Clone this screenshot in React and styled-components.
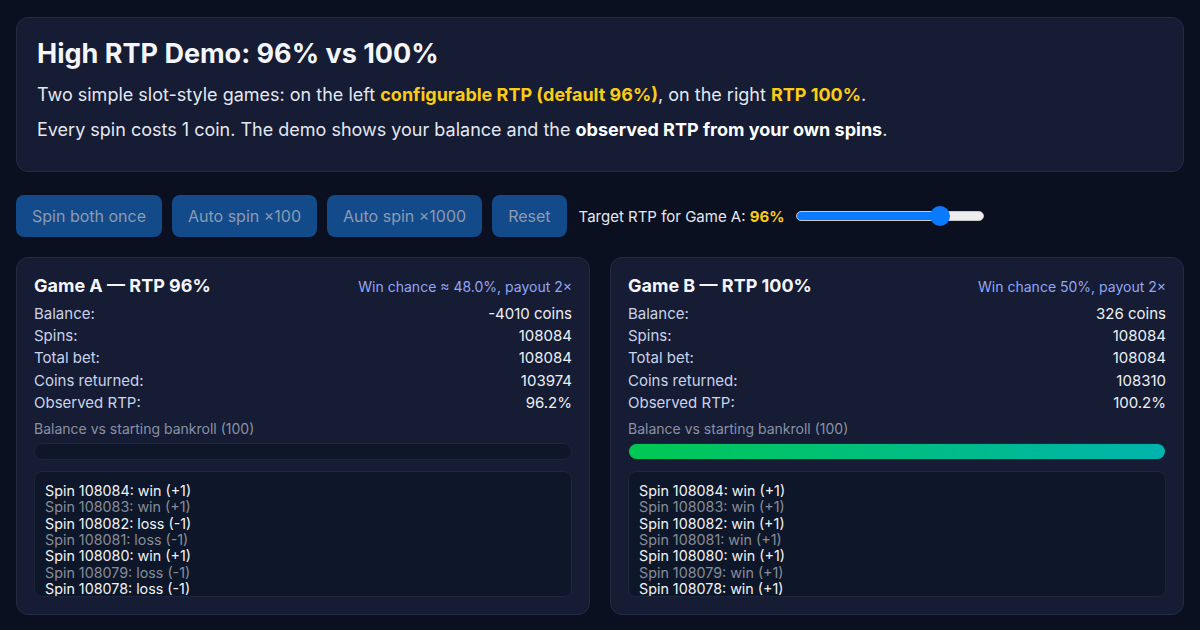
import React from 'react';
import styled, { createGlobalStyle } from 'styled-components';

const GlobalStyle = createGlobalStyle`
  * { box-sizing: border-box; }
  body {
    margin: 0;
    background: #0b1020;
    color: #e8ebf3;
    font-family: Inter, "Noto Sans", "Liberation Sans", sans-serif;
  }
`;

const gameA = {
  title: 'Game A — RTP 96%',
  note: 'Win chance ≈ 48.0%, payout 2×',
  stats: [
    ['Balance:', '-4010 coins'],
    ['Spins:', '108084'],
    ['Total bet:', '108084'],
    ['Coins returned:', '103974'],
    ['Observed RTP:', '96.2%'],
  ],
  fill: 0,
  log: ['win (+1)', 'win (+1)', 'loss (-1)', 'loss (-1)', 'win (+1)', 'loss (-1)', 'loss (-1)'],
};

const gameB = {
  title: 'Game B — RTP 100%',
  note: 'Win chance 50%, payout 2×',
  stats: [
    ['Balance:', '326 coins'],
    ['Spins:', '108084'],
    ['Total bet:', '108084'],
    ['Coins returned:', '108310'],
    ['Observed RTP:', '100.2%'],
  ],
  fill: 100,
  log: ['win (+1)', 'win (+1)', 'win (+1)', 'win (+1)', 'win (+1)', 'win (+1)', 'win (+1)'],
};

function GameCard({ game }) {
  return (
    <Card>
      <CardHead>
        <CardTitle>{game.title}</CardTitle>
        <CardNote>{game.note}</CardNote>
      </CardHead>
      <Stats>
        {game.stats.map(([label, value]) => (
          <StatRow key={label}>
            <StatLabel>{label}</StatLabel>
            <StatValue>{value}</StatValue>
          </StatRow>
        ))}
      </Stats>
      <BarLabel>Balance vs starting bankroll (100)</BarLabel>
      <BarTrack>
        <BarFill style={{ width: `${game.fill}%` }} />
      </BarTrack>
      <LogBox>
        {game.log.map((entry, i) => (
          <LogLine key={i}>Spin {108084 - i}: {entry}</LogLine>
        ))}
      </LogBox>
    </Card>
  );
}

export default function App() {
  return (
    <Page>
      <GlobalStyle />
      <Intro>
        <Title>High RTP Demo: 96% vs 100%</Title>
        <Text>
          Two simple slot-style games: on the left <Accent>configurable RTP (default 96%)</Accent>, on the right <Accent>RTP 100%</Accent>.
        </Text>
        <Text>
          Every spin costs 1 coin. The demo shows your balance and the <strong>observed RTP from your own spins</strong>.
        </Text>
      </Intro>

      <Controls>
        <Button>Spin both once</Button>
        <Button>Auto spin ×100</Button>
        <Button>Auto spin ×1000</Button>
        <Button>Reset</Button>
        <RtpLabel>
          <span>Target RTP for Game A: <Accent>96%</Accent></span>
          <Range type="range" min="80" max="100" defaultValue="96" $fill={(96 - 80) / 20 * 100} />
        </RtpLabel>
      </Controls>

      <Games>
        <GameCard game={gameA} />
        <GameCard game={gameB} />
      </Games>
    </Page>
  );
}

const Page = styled.div`
  padding: 17px 16px 14px;
`;

const Intro = styled.section`
  background: #151c33;
  border: 1px solid #222b46;
  border-radius: 12px;
  padding: 20px 20px 29px;
  display: flex;
  flex-direction: column;
  gap: 10px;
`;

const Title = styled.h1`
  margin: 0 0 2px;
  font-size: 27px;
  line-height: 32px;
  font-weight: 700;
  color: #f3f5fa;
`;

const Text = styled.p`
  margin: 0;
  font-size: 18px;
  line-height: 25px;
  color: #e4e8f1;

  strong {
    font-weight: 700;
    color: #ffffff;
  }
`;

const Accent = styled.span`
  color: #facc15;
  font-weight: 700;
`;

const Controls = styled.div`
  display: flex;
  align-items: center;
  gap: 10px;
  margin: 23px 0 20px;
`;

const Button = styled.button`
  background: #124a8a;
  color: #8b9bb2;
  border: none;
  border-radius: 8px;
  padding: 0 16px;
  height: 42px;
  font-family: inherit;
  font-size: 16px;
`;

const RtpLabel = styled.label`
  display: flex;
  align-items: center;
  gap: 12px;
  margin-left: 2px;
  font-size: 15px;
  color: #e4e8f1;
`;

const Range = styled.input`
  -webkit-appearance: none;
  appearance: none;
  width: 188px;
  height: 10px;
  margin: 0;
  border-radius: 5px;
  border: 1px solid #c9c9c9;
  background: linear-gradient(
    to right,
    #0a7bff 0%,
    #0a7bff ${(p) => p.$fill}%,
    #ededed ${(p) => p.$fill}%,
    #ededed 100%
  );

  &::-webkit-slider-thumb {
    -webkit-appearance: none;
    width: 20px;
    height: 20px;
    border-radius: 50%;
    background: #0a7bff;
    border: none;
  }
`;

const Games = styled.div`
  display: grid;
  grid-template-columns: 1fr 1fr;
  gap: 20px;
`;

const Card = styled.section`
  background: #151c33;
  border: 1px solid #222b46;
  border-radius: 12px;
  padding: 16px 17px 17px;
`;

const CardHead = styled.div`
  display: flex;
  justify-content: space-between;
  align-items: center;
`;

const CardTitle = styled.h2`
  margin: 0;
  font-size: 18px;
  line-height: 24px;
  font-weight: 700;
  color: #f3f5fa;
`;

const CardNote = styled.span`
  font-size: 14px;
  color: #93a6f7;
`;

const Stats = styled.div`
  margin-top: 5px;
`;

const StatRow = styled.div`
  display: flex;
  justify-content: space-between;
  font-size: 15px;
  line-height: 22.2px;
`;

const StatLabel = styled.span`
  color: #c9d3ec;
`;

const StatValue = styled.span`
  color: #eef0f5;
`;

const BarLabel = styled.div`
  margin-top: 6px;
  font-size: 14px;
  line-height: 18px;
  color: #8a92a6;
`;

const BarTrack = styled.div`
  margin-top: 5px;
  height: 17px;
  border-radius: 9px;
  background: #0e1729;
  border: 1px solid #1c253b;
  overflow: hidden;
`;

const BarFill = styled.div`
  height: 100%;
  background: linear-gradient(to right, #00c853, #00b3ad);
`;

const LogBox = styled.div`
  margin-top: 11px;
  height: 126px;
  overflow: hidden;
  background: #0e1729;
  border: 1px solid #1c253b;
  border-radius: 8px;
  padding: 11px 10px 0;
`;

const LogLine = styled.div`
  font-size: 14.3px;
  line-height: 16.3px;
  color: #f1f3f7;

  &:nth-child(even) {
    color: #868c99;
  }
`;
